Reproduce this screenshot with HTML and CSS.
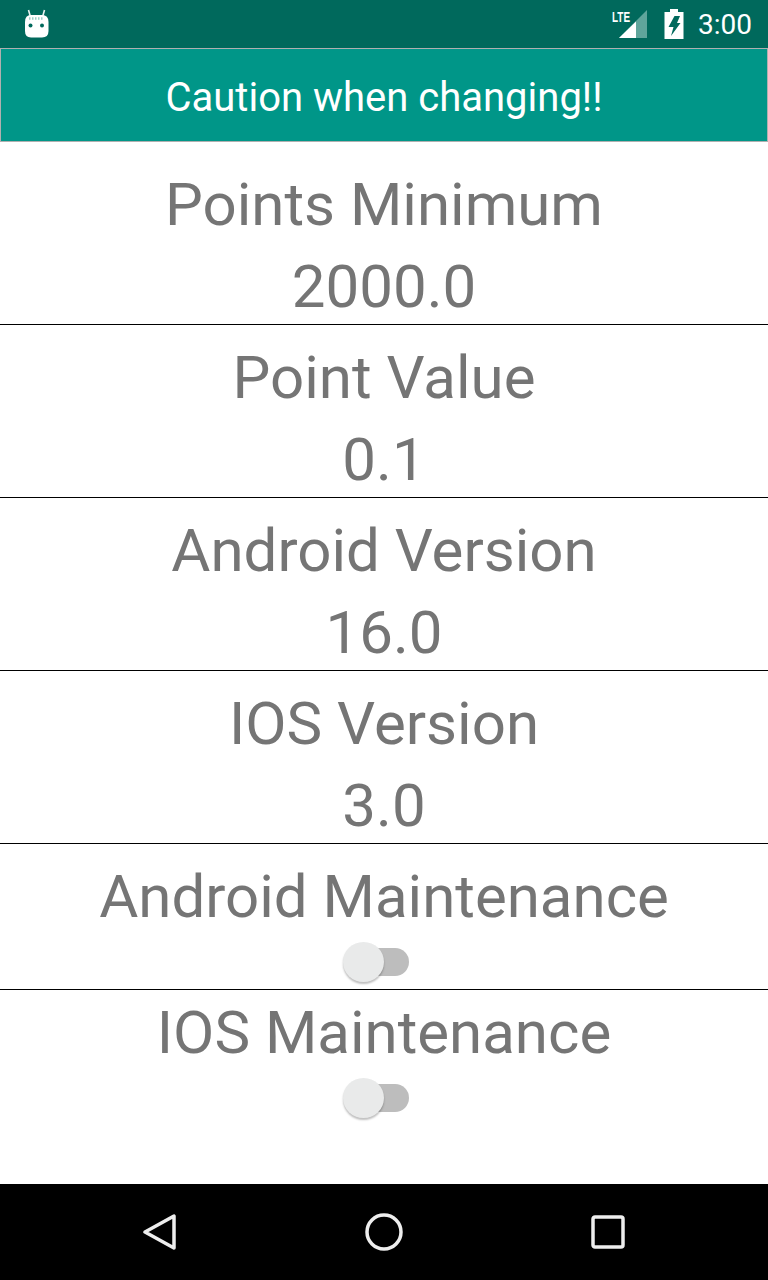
FILE: index.html
```html
<!DOCTYPE html>
<html>
<head>
<meta charset="utf-8">
<title>Settings</title>
<link rel="stylesheet" href="styles.css">
</head>
<body>
<div class="screen">
  <div class="statusBar">
    <svg class="droid" width="26" height="30" viewBox="0 0 26 30">
      <path d="M4.5 1 L6.5 8 M20.5 1 L18.5 8" stroke="#e8f3f1" stroke-width="1.6" fill="none"/>
      <path d="M7 6 H18 Q24.5 6 24.5 13 V22 Q24.5 28.5 18 28.5 H7 Q1 28.5 1 22 V13 Q1 6 7 6 Z" fill="#fff"/>
      <circle cx="6.5" cy="16.5" r="2" fill="#00695c"/>
      <circle cx="18" cy="16.5" r="2" fill="#00695c"/>
      <path d="M5 9.5 H20" stroke="#9ccfc8" stroke-width="2.5" stroke-dasharray="1.5 1.5"/>
    </svg>
    <div class="statusRight">
      <svg class="signal" width="36" height="30" viewBox="0 0 36 30">
        <path d="M35 1 V29 H7 Z" fill="#5fa59b"/>
        <path d="M24 12.5 V29 H7 Z" fill="#fff"/>
        <text x="0" y="13" class="lte" textLength="18" lengthAdjust="spacingAndGlyphs">LTE</text>
      </svg>
      <svg class="battery" width="20" height="30" viewBox="0 0 20 30">
        <path d="M6 0 H14 V3 H19.5 V30 H0.5 V3 H6 Z" fill="#fff"/>
        <path d="M10.5 7 H16 L13 14 H16.5 L7 27 L9.5 18 H4.5 Z" fill="#00695c"/>
      </svg>
      <span class="clock">3:00</span>
    </div>
  </div>

  <div class="header">Caution when changing!!</div>

  <div class="content">
    <div class="row first">
      <p class="label">Points Minimum</p>
      <p class="value">2000.0</p>
    </div>
    <div class="row">
      <p class="label">Point Value</p>
      <p class="value">0.1</p>
    </div>
    <div class="row">
      <p class="label">Android Version</p>
      <p class="value">16.0</p>
    </div>
    <div class="row">
      <p class="label">IOS Version</p>
      <p class="value">3.0</p>
    </div>
    <div class="row maintenance">
      <p class="label">Android Maintenance</p>
      <div class="switch"><span class="track"></span><span class="thumb"></span></div>
    </div>
    <div class="row last">
      <p class="label">IOS Maintenance</p>
      <div class="switch"><span class="track"></span><span class="thumb"></span></div>
    </div>
  </div>

  <div class="navBar">
    <svg width="34" height="38" viewBox="0 0 34 38">
      <path d="M31 3 V35 L2 19 Z" fill="none" stroke="#eee" stroke-width="3.5" stroke-linejoin="round"/>
    </svg>
    <svg width="38" height="38" viewBox="0 0 38 38">
      <circle cx="19" cy="19" r="17" fill="none" stroke="#eee" stroke-width="3.5"/>
    </svg>
    <svg width="34" height="34" viewBox="0 0 34 34">
      <rect x="2" y="2" width="30" height="30" rx="2" fill="none" stroke="#eee" stroke-width="3.5"/>
    </svg>
  </div>
</div>
</body>
</html>
```

FILE: styles.css
```css
html, body {
  margin: 0;
  padding: 0;
}

body {
  font-family: Roboto, sans-serif;
  background-color: white;
}

.screen {
  width: 768px;
  height: 1280px;
  display: flex;
  flex-direction: column;
  overflow: hidden;
}

.statusBar {
  height: 48px;
  background-color: #00695c;
  display: flex;
  align-items: center;
  justify-content: space-between;
  padding: 0 16px 0 24px;
  flex-shrink: 0;
}

.statusRight {
  display: flex;
  align-items: center;
}

.signal {
  margin-right: 16px;
}

.lte {
  font-family: "Liberation Sans", sans-serif;
  font-size: 15px;
  font-weight: bold;
  fill: white;
}

.battery {
  margin-right: 14px;
}

.clock {
  color: white;
  font-size: 28px;
}

.header {
  height: 92px;
  line-height: 98px;
  flex-shrink: 0;
  text-align: center;
  color: white;
  font-size: 40px;
  background-color: #009688;
  border: 1px solid #b0b0b0;
}

.content {
  flex: 1;
  background-color: white;
}

.row {
  border-bottom: 1px solid black;
  text-align: center;
  height: 172px;
}

.row.first {
  height: 182px;
}

.row.first .label {
  padding-top: 22px;
}

.row.maintenance {
  height: 145px;
}

.row.last {
  border-bottom: none;
}

.row.last .label {
  padding-top: 2px;
}

.label, .value {
  margin: 0;
  color: #757575;
  font-size: 60px;
  line-height: 82px;
}

.label {
  padding-top: 12px;
}

.switch {
  position: relative;
  width: 82px;
  height: 42px;
  margin: 4px auto 0;
}

.track {
  position: absolute;
  left: 10px;
  top: 6px;
  width: 56px;
  height: 28px;
  border-radius: 14px;
  background-color: #bdbdbd;
}

.thumb {
  position: absolute;
  left: 0;
  top: 0;
  width: 41px;
  height: 40px;
  border-radius: 50%;
  background-color: #e9eaea;
  box-shadow: 0 2px 2px rgba(0, 0, 0, 0.25);
}

.navBar {
  height: 96px;
  flex-shrink: 0;
  background-color: black;
  display: flex;
  align-items: center;
  justify-content: space-between;
  padding: 0 143px;
}
```
